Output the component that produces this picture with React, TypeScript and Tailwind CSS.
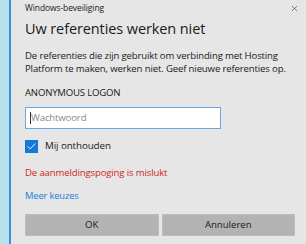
import { Check, X } from 'lucide-react';

export default function App() {
  return (
    <div className="flex h-[244px] w-[306px] overflow-hidden font-['Open_Sans',sans-serif] text-[#1a1a1a]">
      <div className="w-[9px] shrink-0 bg-[#b7e2ed]" />
      <div className="w-[2px] shrink-0 bg-[#3f8fd8]" />
      <div className="flex flex-1 flex-col bg-[#e6e6e6] pl-[14px] pr-[11px]">
        {/* titel */}
        <div className="flex h-[16px] items-center justify-between">
          <span className="text-[8.5px] tracking-[-0.1px]">Windows-beveiliging</span>
          <X className="mr-[-4px] h-[9px] w-[9px] text-[#333]" strokeWidth={1.5} />
        </div>
        <h1 className="mt-[3px] text-[14.5px] leading-[20px] tracking-[-0.1px]">Uw referenties werken niet</h1>

        <p className="mt-[10px] text-[9.6px] leading-[13px] tracking-[-0.15px]">
          De referenties die zijn gebruikt om verbinding met Hosting Platform te maken, werken niet. Geef nieuwe referenties op.
        </p>

        <div className="mt-[11px] text-[9.6px] leading-[13px] tracking-[-0.2px]">ANONYMOUS LOGON</div>

        <div className="mt-[8px] flex h-[22px] w-[196px] items-center border border-[#64a9e6] bg-white pl-[4px]">
          <span className="h-[12px] w-px bg-[#333]" />
          <span className="text-[9.6px] text-[#8a8a8a] tracking-[-0.15px]">Wachtwoord</span>
        </div>

        <label className="mt-[11px] flex h-[13px] items-center gap-[7px]">
          <span className="flex h-[13px] w-[13px] items-center justify-center bg-[#1479d6]">
            <Check className="h-[11px] w-[11px] text-white" strokeWidth={2} />
          </span>
          <span className="text-[9.8px] tracking-[-0.1px]">Mij onthouden</span>
        </label>

        <div className="mt-[13px] text-[9.6px] leading-[13px] tracking-[-0.15px] text-[#d0262b]">
          De aanmeldingspoging is mislukt
        </div>

        <a className="mt-[10px] text-[9.4px] leading-[13px] tracking-[-0.15px] text-[#1a7fd8]">Meer keuzes</a>

        <div className="mt-[12px] flex gap-[3px]">
          <button className="h-[22px] flex-1 border border-[#bdbdbd] bg-[#b3b3b3] text-[9.6px]">OK</button>
          <button className="h-[22px] flex-1 border border-[#bdbdbd] bg-[#b3b3b3] text-[9.6px]">Annuleren</button>
        </div>
      </div>
    </div>
  );
}
